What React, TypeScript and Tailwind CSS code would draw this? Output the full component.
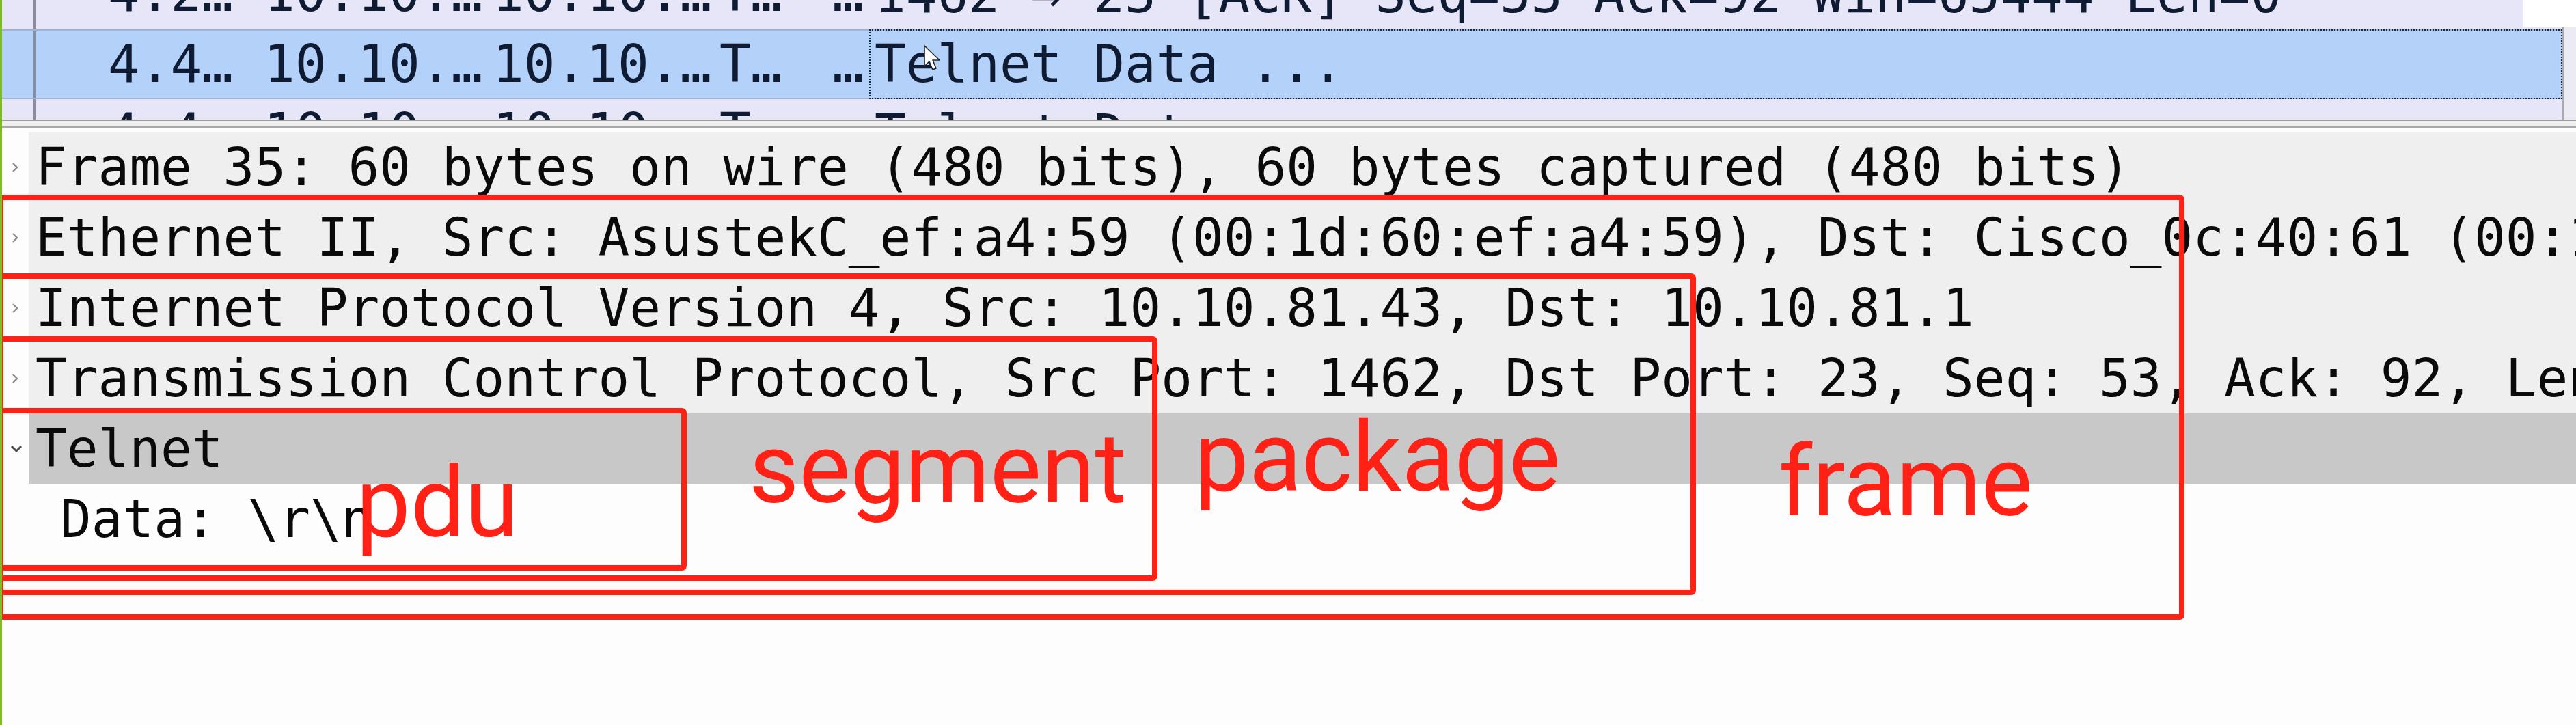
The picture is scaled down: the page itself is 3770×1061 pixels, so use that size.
import React from "react";

type Packet = {
  time: string;
  src: string;
  dst: string;
  proto: string;
  len: string;
  info: string;
  selected?: boolean;
};

const packets: Packet[] = [
  { time: "4.2…", src: "10.10.…", dst: "10.10.…", proto: "T…", len: "…", info: "1462 → 23 [ACK] Seq=53 Ack=92 Win=65444 Len=0" },
  { time: "4.4…", src: "10.10.…", dst: "10.10.…", proto: "T…", len: "…", info: "Telnet Data ...", selected: true },
  { time: "4.4…", src: "10.10.…", dst: "10.10.…", proto: "T…", len: "…", info: "Telnet Data ..." },
];

type TreeRow = {
  text: string;
  kind: "closed" | "open" | "leaf";
  bg: string;
};

const tree: TreeRow[] = [
  { text: "Frame 35: 60 bytes on wire (480 bits), 60 bytes captured (480 bits)", kind: "closed", bg: "bg-[#efeff0]" },
  { text: "Ethernet II, Src: AsustekC_ef:a4:59 (00:1d:60:ef:a4:59), Dst: Cisco_0c:40:61 (00:1b:54:0c:40:61)", kind: "closed", bg: "bg-[#efeff0]" },
  { text: "Internet Protocol Version 4, Src: 10.10.81.43, Dst: 10.10.81.1", kind: "closed", bg: "bg-[#efeff0]" },
  { text: "Transmission Control Protocol, Src Port: 1462, Dst Port: 23, Seq: 53, Ack: 92, Len: 2", kind: "closed", bg: "bg-[#efeff0]" },
  { text: "Telnet", kind: "open", bg: "bg-[#c8c8c8]" },
  { text: "Data: \\r\\n", kind: "leaf", bg: "bg-[#fdfdfd]" },
];

function PacketRow({ p }: { p: Packet }) {
  return (
    <div
      className={`flex h-[102px] shrink-0 text-[#0e1b33] ${
        p.selected ? "bg-[#b4d1fa] border-y-2 border-[#9cb4d9]" : "bg-[#e7e5f8]"
      }`}
    >
      <div className="w-[49px] shrink-0 border-r-[3px] border-[#8c8c9c]" />
      <div className="w-[98px] shrink-0" />
      <div className="w-[230px] shrink-0 pl-[8px]">{p.time}</div>
      <div className="w-[335px] shrink-0 pl-[6px]">{p.src}</div>
      <div className="w-[332px] shrink-0 pl-[6px]">{p.dst}</div>
      <div className="w-[100px] shrink-0 pl-[6px]">{p.proto}</div>
      <div className="w-[125px] shrink-0 pr-[8px] text-right">{p.len}</div>
      <div
        className={`flex-1 min-w-0 overflow-hidden pl-[6px] ${
          p.selected ? "border-2 border-dotted border-[#1a2740] -my-[2px]" : "border-2 border-transparent"
        }`}
      >
        {p.info}
      </div>
    </div>
  );
}

function Chevron({ kind }: { kind: TreeRow["kind"] }) {
  if (kind === "closed")
    return (
      <svg width="12" height="18" viewBox="0 0 12 18" className="ml-[13px]">
        <path d="M3 3 L9 9 L3 15" fill="none" stroke="#8c8c8c" strokeWidth="2.4" />
      </svg>
    );
  if (kind === "open")
    return (
      <svg width="18" height="12" viewBox="0 0 18 12" className="ml-[12px]">
        <path d="M2 2 L9 9 L16 2" fill="none" stroke="#4a4a4a" strokeWidth="3" />
      </svg>
    );
  return null;
}

function Box({ cls }: { cls: string }) {
  return <div className={`absolute border-[8px] border-[#ff2115] rounded-[7px] pointer-events-none ${cls}`} />;
}

export default function App() {
  return (
    <div className="relative w-[3770px] h-[1061px] overflow-hidden bg-[#fdfdfd] border-l-[3px] border-[#7fba2b] font-['DejaVu_Sans_Mono',monospace] text-[76px]">
      {/* packet list */}
      <div className="flex h-[175px] overflow-hidden bg-[#e7e5f8]">
        <div className="flex-1 min-w-0 flex flex-col -mt-[59px] leading-[98px] whitespace-nowrap">
          {packets.map((p, i) => (
            <PacketRow key={i} p={p} />
          ))}
        </div>
        <div className="w-[20px] shrink-0 border-l-2 border-[#a9a9b0] bg-[#ecebf3]" />
      </div>

      {/* splitter */}
      <div className="h-[12px] border-t-2 border-b-2 border-t-[#9c9c9c] border-b-[#a8a8a8] bg-[#efefef]" />

      {/* details tree */}
      <div className="flex flex-col pt-[6px] leading-[103px] whitespace-nowrap text-[#0a0a0a]">
        {tree.map((r, i) => (
          <div key={i} className="flex h-[103px] shrink-0">
            <div className="w-[39px] shrink-0 flex items-center">
              <Chevron kind={r.kind} />
            </div>
            <div className={`flex-1 min-w-0 overflow-hidden ${r.bg} ${r.kind === "leaf" ? "pl-[46px]" : "pl-[10px]"}`}>
              {r.text}
            </div>
          </div>
        ))}
      </div>

      {/* top-right white patch */}
      <div className="absolute right-0 top-0 w-[77px] h-[40px] bg-white" />

      {/* mouse cursor */}
      <svg width="26" height="40" viewBox="0 0 26 40" className="absolute left-[1349px] top-[66px]">
        <path d="M1 1 L1 31 L8 24 L13 36 L18 34 L13 22 L23 22 Z" fill="#ffffff" stroke="#222" strokeWidth="1.6" strokeLinejoin="round" />
      </svg>

      {/* annotations */}
      <Box cls="-left-[6px] top-[285px] w-[3200px] h-[622px]" />
      <Box cls="-left-[6px] top-[400px] w-[2485px] h-[471px]" />
      <Box cls="-left-[6px] top-[492px] w-[1697px] h-[358px]" />
      <Box cls="-left-[6px] top-[597px] w-[1008px] h-[238px]" />

      <div className="absolute left-[518px] top-[666px] font-['Roboto',sans-serif] text-[142px] leading-none text-[#ff2115]">pdu</div>
      <div className="absolute left-[1093px] top-[616px] font-['Roboto',sans-serif] text-[142px] leading-none text-[#ff2115]">segment</div>
      <div className="absolute left-[1745px] top-[599px] font-['Roboto',sans-serif] text-[142px] leading-none text-[#ff2115]">package</div>
      <div className="absolute left-[2600px] top-[635px] font-['Roboto',sans-serif] text-[142px] leading-none text-[#ff2115]">frame</div>
    </div>
  );
}
